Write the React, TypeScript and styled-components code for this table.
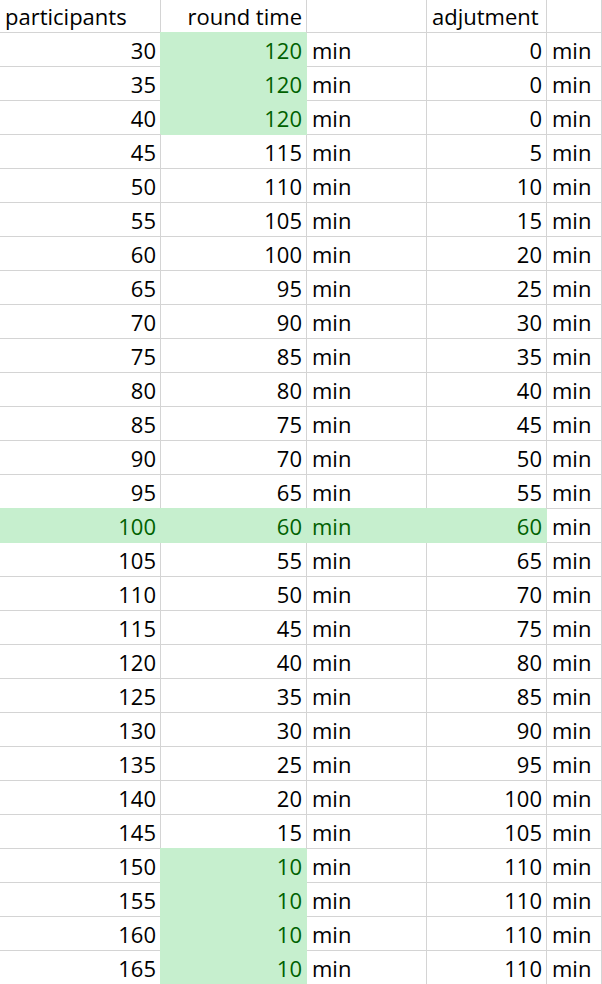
import React from "react";
import styled, { createGlobalStyle } from "styled-components";

const GlobalStyle = createGlobalStyle`
  html, body {
    margin: 0;
    padding: 0;
    background: #ffffff;
  }
`;

const FILL = "#C6EFCE";
const FILL_TEXT = "#006100";
const GRID = "#D4D4D4";

const Sheet = styled.div`
  display: grid;
  grid-template-columns: 161px 146px 120px 120px 55px;
  grid-auto-rows: 34px;
  grid-template-rows: 33px;
  width: 602px;
  font-family: "Open Sans", "Liberation Sans", sans-serif;
  font-size: 22px;
  color: #000;
  overflow: hidden;
`;

const Cell = styled.div<{ $align?: "left" | "right"; $fill?: boolean; $header?: boolean }>`
  box-sizing: border-box;
  border-right: 1px solid ${(p) => (p.$fill ? FILL : GRID)};
  border-bottom: 1px solid ${(p) => (p.$fill ? FILL : GRID)};
  background: ${(p) => (p.$fill ? FILL : "transparent")};
  color: ${(p) => (p.$fill ? FILL_TEXT : "#000")};
  box-shadow: ${(p) => (p.$fill ? `-1px -1px 0 0 ${FILL}` : "none")};
  text-align: ${(p) => (p.$align === "right" ? "right" : "left")};
  padding-left: ${(p) => (p.$align === "right" ? "0" : "5px")};
  padding-right: ${(p) => (p.$align === "right" ? "4px" : "0")};
  padding-top: ${(p) => (p.$header ? "0" : "1px")};
  line-height: 32px;
  white-space: nowrap;
  overflow: visible;
`;

type Row = { p: number; rt: number; adj: number };

const rows: Row[] = Array.from({ length: 28 }, (_, i) => {
  const p = 30 + i * 5;
  const rt = Math.max(10, Math.min(120, 160 - p));
  return { p, rt, adj: 120 - rt };
});

export default function App() {
  return (
    <>
      <GlobalStyle />
      <Sheet>
        <Cell $header>participants</Cell>
        <Cell $header $align="right">round time</Cell>
        <Cell $header />
        <Cell $header>adjutment</Cell>
        <Cell $header />
        {rows.map((r) => {
          const rowFill = r.p === 100;
          const rtFill = rowFill || r.rt === 120 || r.rt === 10;
          return (
            <React.Fragment key={r.p}>
              <Cell $align="right" $fill={rowFill}>{r.p}</Cell>
              <Cell $align="right" $fill={rtFill}>{r.rt}</Cell>
              <Cell $fill={rowFill}>min</Cell>
              <Cell $align="right" $fill={rowFill}>{r.adj}</Cell>
              <Cell>min</Cell>
            </React.Fragment>
          );
        })}
      </Sheet>
    </>
  );
}
